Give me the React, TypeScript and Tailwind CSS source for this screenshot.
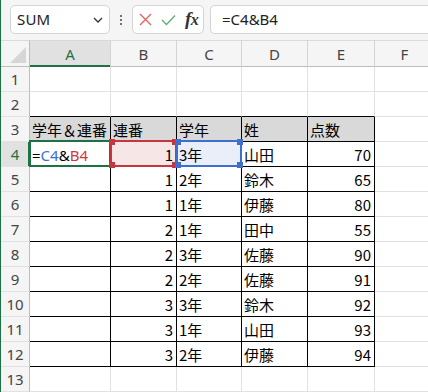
import React from "react";

const JP = "font-['Noto_Sans_CJK_JP','Noto_Sans',sans-serif]";

const data: [string, string, string, string][] = [
  ["1", "3年", "山田", "70"],
  ["1", "2年", "鈴木", "65"],
  ["1", "1年", "伊藤", "80"],
  ["2", "1年", "田中", "55"],
  ["2", "3年", "佐藤", "90"],
  ["2", "2年", "佐藤", "91"],
  ["3", "3年", "鈴木", "92"],
  ["3", "1年", "山田", "93"],
  ["3", "2年", "伊藤", "94"],
];

function Handles({ color }: { color: string }) {
  const base = "absolute w-[6px] h-[6px] " + color;
  return (
    <>
      <div className={base + " -top-[3px] -left-[3px]"} />
      <div className={base + " -top-[3px] -right-[3px]"} />
      <div className={base + " -bottom-[3px] -left-[3px]"} />
      <div className={base + " -bottom-[3px] -right-[3px]"} />
    </>
  );
}

export default function App() {
  const cols = ["A", "B", "C", "D", "E", "F"];
  const rowNums = Array.from({ length: 13 }, (_, i) => i + 1);

  const renderRow = (r: number) => {
    const inTable = r >= 3 && r <= 12;
    const aboveTable = r === 2;
    const rowHeader = (
      <div
        key={"h" + r}
        className={
          "relative flex items-end justify-center pb-[1px] border-r border-b border-r-[#bdbdbd] border-b-[#e1e1e1] text-[15px] " +
          (r === 4 ? "bg-[#e1e1e1] text-[#1e7145]" : "bg-[#f5f5f5] text-[#444]")
        }
      >
        <span className="font-['Noto_Sans',sans-serif] leading-[22px]">{r}</span>
        {r === 4 && <div className="absolute right-[-1px] top-0 bottom-0 w-[2px] bg-[#1e7145]" />}
      </div>
    );
    const cells: React.ReactNode[] = [rowHeader];
    for (let c = 0; c < 6; c++) {
      const tableCol = c < 5;
      const rb = inTable && tableCol ? "border-r-black" : "border-r-[#e1e1e1]";
      const bb = (inTable || aboveTable) && tableCol ? "border-b-black" : "border-b-[#e1e1e1]";
      let bg = "bg-white";
      if (r === 3 && tableCol) bg = "bg-[#d9d9d9]";
      if (r === 4 && c === 1) bg = "bg-[#f6e6e6]";
      if (r === 4 && c === 2) bg = "bg-[#e9eef8]";
      let content: React.ReactNode = null;
      let align = "justify-start pl-[2px]";
      if (r === 3) {
        content = ["学年＆連番", "連番", "学年", "姓", "点数", ""][c];
      } else if (r >= 4 && r <= 12) {
        const d = data[r - 4];
        if (c === 0 && r === 4) {
          content = (
            <span className="font-['Noto_Sans',sans-serif] text-[15px]">
              <span className="text-black">=</span>
              <span className="text-[#3a6fd8]">C4</span>
              <span className="text-black">&amp;</span>
              <span className="text-[#d0383e]">B4</span>
            </span>
          );
        } else if (c === 1) {
          content = d[0];
          align = "justify-end pr-[3px]";
        } else if (c === 2) content = d[1];
        else if (c === 3) content = d[2];
        else if (c === 4) {
          content = d[3];
          align = "justify-end pr-[3px]";
        }
      }
      cells.push(
        <div
          key={r + "-" + c}
          className={
            "relative flex items-end overflow-visible whitespace-nowrap border-r border-b text-[15px] text-black " +
            rb + " " + bb + " " + bg + " " + align + " " + JP
          }
        >
          <span className="leading-[22px]">{content}</span>
          {r === 4 && c === 0 && (
            <div className="absolute -left-[1px] -top-[2px] -right-[1px] -bottom-[1px] border-2 border-[#1e7145] z-10" />
          )}
          {r === 4 && c === 1 && (
            <div className="absolute -left-[1px] -top-[2px] -right-[1px] -bottom-[1px] border-2 border-[#c8363d] z-20">
              <Handles color="bg-[#c8363d]" />
            </div>
          )}
          {r === 4 && c === 2 && (
            <div className="absolute -left-[1px] -top-[2px] -right-[1px] -bottom-[1px] border-2 border-[#3c6fcf] z-20">
              <Handles color="bg-[#3c6fcf]" />
            </div>
          )}
        </div>
      );
    }
    return cells;
  };

  return (
    <div className="w-[428px] h-[392px] overflow-hidden bg-[#f5f5f5] border-l border-l-[#1e7145] font-['Noto_Sans',sans-serif]">
      {/* toolbar */}
      <div className="h-[40px] flex items-start pt-[5px] pl-[9px]">
        <div className="w-[100px] h-[29px] bg-white border border-[#d4d4d4] rounded-[5px] flex items-center justify-between pl-[6px] pr-[6px]">
          <span className="text-[15px] text-[#222] tracking-[0.2px]">SUM</span>
          <svg width="10" height="6" viewBox="0 0 10 6">
            <path d="M1 1 L5 5 L9 1" fill="none" stroke="#333" strokeWidth="1.3" />
          </svg>
        </div>
        <div className="w-[22px] h-[29px] flex flex-col items-center justify-center gap-[2px]">
          <div className="w-[2px] h-[2px] bg-[#444] rounded-full" />
          <div className="w-[2px] h-[2px] bg-[#444] rounded-full" />
          <div className="w-[2px] h-[2px] bg-[#444] rounded-full" />
        </div>
        <div className="w-[72px] h-[29px] bg-white border border-[#d4d4d4] rounded-[5px] flex items-center pl-[6px]">
          <svg width="13" height="13" viewBox="0 0 13 13">
            <path d="M1 1 L12 12 M12 1 L1 12" stroke="#e06060" strokeWidth="1.3" />
          </svg>
          <svg className="ml-[9px]" width="15" height="12" viewBox="0 0 15 12">
            <path d="M1 6 L5.5 10.5 L14 1.5" fill="none" stroke="#5fae6f" strokeWidth="1.3" />
          </svg>
          <span className="ml-[9px] font-['Liberation_Serif',serif] italic font-bold text-[19px] text-[#333] leading-none -mt-[2px] tracking-[-0.5px]">
            f<span className="text-[16px]">x</span>
          </span>
        </div>
        <div className="ml-[6px] flex-1 h-[29px] bg-white border border-[#d4d4d4] border-r-0 rounded-l-[5px] flex items-center pl-[11px]">
          <span className="text-[15px] text-[#222]">=C4&amp;B4</span>
        </div>
      </div>
      {/* grid */}
      <div className="grid grid-cols-[29px_81px_66px_65px_66px_67px_60px] grid-rows-[27px_repeat(13,25px)] bg-white">
        <div className="relative bg-[#f5f5f5] border-r border-b border-t border-r-[#bdbdbd] border-b-[#bdbdbd] border-t-[#d9d9d9]">
          <svg className="absolute right-[3px] bottom-[3px]" width="16" height="16" viewBox="0 0 16 16">
            <path d="M16 0 L16 16 L0 16 Z" fill="#d6d6d6" />
          </svg>
        </div>
        {cols.map((c, i) => (
          <div
            key={c}
            className={
              "relative flex items-end justify-center pb-[1px] border-r border-b border-t border-t-[#d9d9d9] border-r-[#d4d4d4] border-b-[#bdbdbd] text-[15px] " +
              (i === 0 ? "bg-[#e1e1e1] text-[#1e7145]" : "bg-[#f5f5f5] text-[#444]")
            }
          >
            <span className="leading-[22px]">{c}</span>
            {i === 0 && <div className="absolute left-0 right-0 bottom-[-1px] h-[2px] bg-[#1e7145]" />}
          </div>
        ))}
        {rowNums.map((r) => renderRow(r))}
      </div>
    </div>
  );
}
